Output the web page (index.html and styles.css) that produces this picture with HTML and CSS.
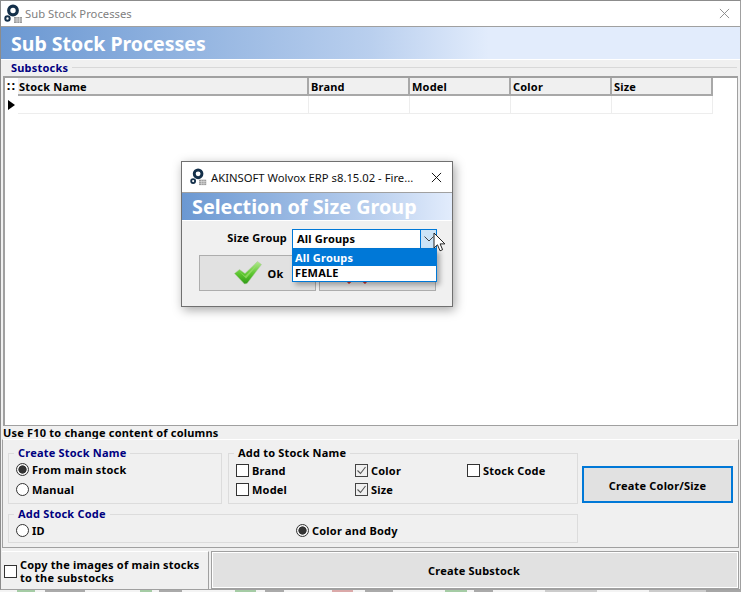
FILE: index.html
```html
<!DOCTYPE html>
<html lang="en">
<head>
<meta charset="utf-8">
<title>Sub Stock Processes</title>
<link rel="stylesheet" href="styles.css">
</head>
<body>
<div class="window">
  <div class="titlebar">
    <svg class="appicon" viewBox="0 0 20 20"><circle cx="9" cy="6.500" r="4.300" fill="none" stroke="#14304a" stroke-width="3.200"/><circle cx="3.500" cy="14.500" r="2.200" fill="none" stroke="#14304a" stroke-width="2"/><rect x="10" y="13" width="8" height="6" fill="#9a9a9a"/><path d="M10 15h8M10 17h8M13 13v6M15.500 13v6" stroke="#e8e8e8" stroke-width=".6"/></svg>
    <span class="titletext muted">Sub Stock Processes</span>
    <svg class="closex light" viewBox="0 0 12 12"><path d="M1 1l10 10M11 1L1 11" stroke="currentColor" stroke-width="1" fill="none"/></svg>
  </div>
  <div class="band"><span class="bandtext">Sub Stock Processes</span></div>

  <section class="substocks">
    <div class="sublegend"><span>Substocks</span></div>
    <div class="gridbox">
      <div class="datagrid">
        <div class="hcell hind">::</div>
        <div class="hcell hname">Stock Name</div>
        <div class="hcell">Brand</div>
        <div class="hcell">Model</div>
        <div class="hcell">Color</div>
        <div class="hcell">Size</div>
        <div class="dcell dind"><span class="marker"></span></div>
        <div class="dcell"></div>
        <div class="dcell"></div>
        <div class="dcell"></div>
        <div class="dcell"></div>
        <div class="dcell"></div>
      </div>
    </div>
  </section>

  <div class="hint">Use F10 to change content of columns</div>

  <div class="panel">
    <div class="groups">
      <div class="grouprow">
        <fieldset class="group g-name">
          <legend class="navy">Create Stock Name</legend>
          <div class="radios">
            <div class="opt"><span class="radio on"></span>From main stock</div>
            <div class="opt"><span class="radio"></span>Manual</div>
          </div>
        </fieldset>
        <fieldset class="group g-add">
          <legend>Add to Stock Name</legend>
          <div class="checkgrid">
            <div class="opt"><span class="check"></span>Brand</div>
            <div class="opt"><span class="check on"><svg viewBox="0 0 11 11"><path d="M1.500 5.500l3 3 5-6.500" fill="none" stroke="#555" stroke-width="1.100"/></svg></span>Color</div>
            <div class="opt"><span class="check"></span>Stock Code</div>
            <div class="opt"><span class="check"></span>Model</div>
            <div class="opt"><span class="check on"><svg viewBox="0 0 11 11"><path d="M1.500 5.500l3 3 5-6.500" fill="none" stroke="#555" stroke-width="1.100"/></svg></span>Size</div>
          </div>
        </fieldset>
      </div>
      <fieldset class="group g-code">
        <legend class="navy">Add Stock Code</legend>
        <div class="coderow">
          <div class="opt"><span class="radio"></span>ID</div>
          <div class="opt"><span class="radio on"></span>Color and Body</div>
        </div>
      </fieldset>
    </div>
    <button class="btn btn-focus">Create Color/Size</button>
  </div>

  <div class="bottom">
    <div class="copybox">
      <span class="check"></span>
      <span class="copytext">Copy the images of main stocks<br>to the substocks</span>
    </div>
    <button class="btn btn-main">Create Substock</button>
  </div>

  <div class="dialog">
    <div class="dtitle">
      <svg class="appicon" viewBox="0 0 20 20"><circle cx="9" cy="6.500" r="4.300" fill="none" stroke="#14304a" stroke-width="3.200"/><circle cx="3.500" cy="14.500" r="2.200" fill="none" stroke="#14304a" stroke-width="2"/><rect x="10" y="13" width="8" height="6" fill="#9a9a9a"/><path d="M10 15h8M10 17h8M13 13v6M15.500 13v6" stroke="#e8e8e8" stroke-width=".6"/></svg>
      <span class="titletext">AKINSOFT Wolvox ERP s8.15.02 - Fire...</span>
      <svg class="closex" viewBox="0 0 12 12"><path d="M1 1l10 10M11 1L1 11" stroke="currentColor" stroke-width="1" fill="none"/></svg>
    </div>
    <div class="dband"><span class="dbandtext">Selection of Size Group</span></div>
    <div class="dbody">
      <div class="drow">
        <span class="dlabel">Size Group</span>
        <div class="combo">
          <span class="comboval">All Groups</span>
          <span class="combobtn"><svg viewBox="0 0 10 6" width="10" height="6"><path d="M.5.500L5 5 9.500.500" fill="none" stroke="#444" stroke-width="1"/></svg></span>
        </div>
      </div>
      <div class="dbtns">
        <button class="btn dbtn">
          <svg class="btnicon" viewBox="0 0 28 24"><defs><linearGradient id="chk" x1="0" y1="0" x2="0" y2="1"><stop offset="0" stop-color="#b4e890"/><stop offset=".55" stop-color="#5cc62f"/><stop offset="1" stop-color="#2f9a16"/></linearGradient></defs><path d="M0.500 12.500L5.500 8.500 11 12.500 23.500 0.500 27.500 3.500 13 22.500 10.500 23z" fill="url(#chk)" stroke="#a9c79a" stroke-width=".5"/><path d="M5.500 10.500L11 15 24 3 12 17.500z" fill="#9be06c" opacity=".7"/></svg>
          Ok
        </button>
        <button class="btn dbtn">
          <svg class="btnicon" viewBox="0 0 24 24"><path d="M4 3l8 6 8-6 3 3-7 6 7 8-3 3-8-7-8 7-3-3 7-8-7-6z" fill="#c8322c"/></svg>
          Cancel
        </button>
      </div>
      <div class="droplist">
        <div class="dropitem sel">All Groups</div>
        <div class="dropitem">FEMALE</div>
      </div>
      <svg class="cursor" viewBox="0 0 13 20"><path d="M1 1v15l3.500-3.200 2.500 6 2.600-1.100-2.500-5.800h4.800z" fill="#fff" stroke="#222" stroke-width="1"/></svg>
    </div>
  </div>
</div>
<div class="behind"></div>
</body>
</html>
```
FILE: styles.css
```css
* { box-sizing: border-box; }
html, body { margin: 0; padding: 0; }
body {
  width: 741px;
  height: 592px;
  overflow: hidden;
  background: #f4f4f4;
  font-family: "Noto Sans", "DejaVu Sans", sans-serif;
  font-size: 11px;
  font-weight: 700;
  letter-spacing: .2px;
  color: #000;
}
.window {
  position: relative;
  width: 741px;
  height: 590px;
  border: 1px solid #a0a0a0;
  border-left-color: #8c8c8c;
  border-top-color: #8c8c8c;
  background: #f0f0f0;
  display: flex;
  flex-direction: column;
}
.behind {
  height: 2px;
  background: linear-gradient(90deg,
    transparent 17px, #a5cca5 17px 35px,
    transparent 35px 45px, #aaa 45px 85px,
    transparent 85px 140px, #a5cca5 140px 152px,
    transparent 152px 159px, #aaa 159px 182px,
    transparent 182px 235px, #a5cca5 235px 256px,
    transparent 256px 265px, #aaa 265px 284px,
    transparent 284px 332px, #dba9a9 332px 353px,
    transparent 353px 365px, #aaa 365px 393px,
    transparent 393px 445px, #a5cca5 445px 467px,
    transparent 467px 474px, #aaa 474px 493px,
    transparent 493px 545px, #ccc 545px 597px,
    transparent 597px 649px, #ccc 649px 706px,
    #a6a6a6 706px);
}
.titlebar {
  height: 26px;
  flex: none;
  background: #fff;
  border-bottom: 1px solid #a0a0a0;
  display: flex;
  align-items: center;
  padding: 0 10px 0 3px;
}
.appicon { width: 20px; height: 20px; flex: none; }
.titletext {
  margin-left: 1px;
  font-size: 11.250px;
  font-weight: 400;
  letter-spacing: 0;
  color: #111;
  white-space: nowrap;
  flex: 1;
}
.titletext.muted { color: #808080; }
.closex { width: 11px; height: 11px; flex: none; color: #000; }
.closex.light { color: #888; }
.band {
  height: 33px;
  flex: none;
  border-bottom: 1px solid #fff;
  background: linear-gradient(90deg, #6b98d2 0%, #b9cfee 50%, #e2ecfc 66%, #e2ecfc 100%);
  padding: 2px 0 0 10px;
  display: flex;
  align-items: center;
}
.bandtext { font-size: 19.500px; font-weight: 700; color: #fff; line-height: 1; letter-spacing: 0; }

.substocks {
  height: 366px;
  flex: none;
  display: flex;
  flex-direction: column;
}
.sublegend {
  height: 15px;
  flex: none;
  display: flex;
  align-items: center;
  padding-left: 10px;
  color: #000080;
  gap: 4px;
}
.sublegend::after {
  content: "";
  flex: 1;
  height: 1px;
  background: #d8d8d8;
  margin-right: 3px;
}
.gridbox {
  flex: 1;
  margin: 1px 2px 0;
  background: #fff;
  border: 1px solid #a0a0a0;
  border-top-width: 2px;
  border-left-width: 2px;
}
.datagrid {
  display: grid;
  grid-template-columns: 13px 291px 101px 101px 101px 101px;
  grid-template-rows: 18px 18px;
  width: 708px;
}
.hcell {
  background: #f0f0f0;
  border-right: 2px solid #a8a8a8;
  border-bottom: 2px solid #a8a8a8;
  padding-left: 2px;
  line-height: 17px;
  color: #000;
}
.hname { padding-left: 1px; }
.hind {
  border-right: 0;
  border-bottom: 0;
  background: #fff;
  text-align: center;
  padding: 0 0 2px;
  font-size: 13px;
  letter-spacing: 1px;
  line-height: 15px;
}
.dcell { border-right: 1px solid #ededed; border-bottom: 1px solid #ededed; }
.dind { border-right: 0; border-bottom: 0; display: flex; align-items: center; padding-left: 3px; }
.marker {
  width: 0;
  height: 0;
  border-left: 7px solid #000;
  border-top: 5.500px solid transparent;
  border-bottom: 5.500px solid transparent;
}

.hint { height: 13px; flex: none; line-height: 13px; padding-left: 2px; }

.panel {
  height: 109px;
  flex: none;
  margin: 0 1px;
  border: 1px solid #a0a0a0;
  border-top-color: #fff;
  padding: 6px 4px 0 5px;
  display: flex;
  gap: 4px;
}
.groups { width: 570px; display: flex; flex-direction: column; gap: 3px; }
.grouprow { display: flex; gap: 6px; }
.group {
  margin: 0;
  padding: 0 0 0 7px;
  min-width: 0;
  border: 1px solid #dcdcdc;
}
.group legend { margin-left: -2px; padding: 0 4px; line-height: 14px; color: #000; }
.group legend.navy { color: #000080; }
.g-name { width: 214px; height: 58px; }
.g-add { width: 350px; height: 58px; }
.g-code { height: 36px; }
.radios { margin-top: -1px; }
.opt { height: 20px; display: flex; align-items: center; gap: 3px; white-space: nowrap; }
.checkgrid { display: grid; grid-template-columns: 119px 112px auto; grid-auto-rows: 19px; margin-top: 1px; }
.checkgrid .opt { height: 19px; }
.coderow { display: grid; grid-template-columns: 280px auto; margin-top: -1px; }
.radio {
  width: 13px;
  height: 13px;
  flex: none;
  border: 1px solid #333;
  border-radius: 50%;
  background: #fff;
}
.radio.on { background: radial-gradient(circle, #333 0 3.800px, #f4f4f4 4.400px); }
.check {
  width: 13px;
  height: 13px;
  flex: none;
  border: 1px solid #333;
  background: #fff;
  display: block;
}
.check.on { background: #f0f0f0; border-color: #444; }
.check svg { width: 11px; height: 11px; display: block; }

.btn {
  font: inherit;
  letter-spacing: inherit;
  color: #000;
  background: #e1e1e1;
  border: 1px solid #adadad;
  padding: 0;
}
.btn-focus {
  width: 151px;
  height: 37px;
  margin-top: 20px;
  border: 2px solid #0078d7;
  padding-top: 2px;
}
.bottom { height: 38px; flex: none; margin-top: 3px; display: flex; padding: 0 1px; gap: 2px; }
.copybox {
  width: 207px;
  background: #f0f0f0;
  border-top: 1px solid #fff;
  border-right: 1px solid #a0a0a0;
  display: flex;
  align-items: center;
  gap: 3px;
  padding: 1px 0 0 2px;
}
.copytext { line-height: 13px; white-space: nowrap; margin-top: 2px; height: 26px; margin-bottom: 2px; }
.btn-main { flex: 1; border: 1px solid #a0a0a0; outline: 1px solid #fff; outline-offset: -2px; padding-right: 2px; }

.dialog {
  position: absolute;
  left: 180px;
  top: 160px;
  width: 272px;
  height: 146px;
  border: 1px solid #707070;
  background: #f0f0f0;
  box-shadow: 2px 3px 10px rgba(0,0,0,.35);
  display: flex;
  flex-direction: column;
}
.dtitle {
  height: 31px;
  flex: none;
  background: #fff;
  border-bottom: 1px solid #a0a0a0;
  display: flex;
  align-items: center;
  padding: 0 10px 0 8px;
}
.dtitle .appicon { width: 18px; height: 18px; }
.dtitle .titletext { margin-left: 3px; }
.dband {
  height: 28px;
  flex: none;
  border-bottom: 1px solid #fff;
  background: linear-gradient(90deg, #6b98d2 0%, #b9cfee 70%, #e2ecfc 100%);
  padding-left: 10px;
  display: flex;
  align-items: center;
}
.dbandtext { font-size: 19.800px; font-weight: 700; color: #fff; line-height: 1; white-space: nowrap; letter-spacing: 0; }
.dbody { position: relative; flex: 1; padding: 8px 15px 0 17px; }
.drow { display: flex; align-items: center; justify-content: flex-end; gap: 5px; height: 20px; }
.dlabel { margin-top: -3px; }
.combo {
  width: 145px;
  height: 20px;
  border: 1px solid #0078d7;
  background: #fff;
  display: flex;
  align-items: center;
  padding-left: 4px;
}
.comboval { flex: 1; margin-top: -2px; }
.combobtn {
  width: 16px;
  height: 18px;
  flex: none;
  background: #cce4f7;
  border-left: 1px solid #0078d7;
  display: flex;
  align-items: center;
  justify-content: center;
}
.dbtns { display: flex; gap: 3px; margin-top: 6px; }
.dbtn {
  width: 117px;
  height: 36px;
  display: flex;
  align-items: center;
  justify-content: center;
  gap: 6px;
  padding-left: 2px;
}
.btnicon { width: 28px; height: 24px; flex: none; }
.droplist {
  position: absolute;
  left: 110px;
  top: 28px;
  width: 145px;
  height: 33px;
  border: 1px solid #0078d7;
  background: #fff;
  box-shadow: 3px 3px 5px rgba(0,0,0,.3);
}
.dropitem { height: 15px; line-height: 14px; padding-left: 2px; }
.dropitem.sel { height: 16px; line-height: 15px; background: #0078d7; color: #fff; }
.cursor { position: absolute; left: 251px; top: 11px; width: 13px; height: 20px; }
```
